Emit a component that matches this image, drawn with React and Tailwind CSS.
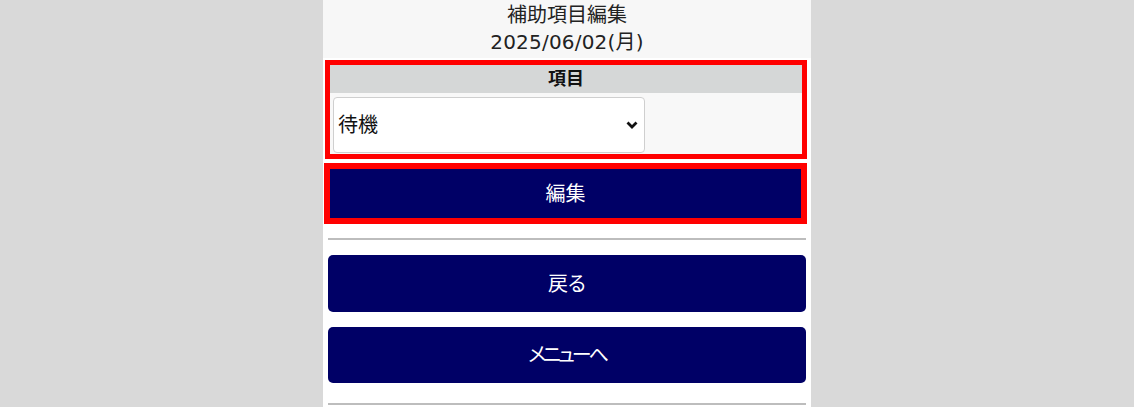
const FONT = {
    fontFamily: '"DejaVu Sans", "Noto Sans CJK JP", sans-serif',
};

const NavyButton = ({ label, className = "" }) => (
    <button
        className={`w-full bg-[#000066] text-white text-[20px] flex items-center justify-center [font-feature-settings:'palt'] ${className}`}
    >
        {label}
    </button>
);

const App = () => {
    return (
        <div
            className="min-h-[407px] w-full bg-[#d9d9d9] flex justify-center"
            style={FONT}
        >
            <div className="w-[488px] bg-white flex flex-col">
                {/* title */}
                <div className="bg-[#f7f7f7] h-[58px] flex flex-col items-center text-[20px] leading-[27px] text-[#222] pt-[2px]">
                    <p>補助項目編集</p>
                    <p className="tracking-[0.2px]">2025/06/02(月)</p>
                </div>

                {/* field */}
                <div className="mt-[2px] ml-[2px] mr-[4px] border-[5px] border-[#ff0000] bg-[#f8f8f8]">
                    <div className="h-[28px] bg-[#d5d7d7] text-center text-[18px] leading-[28px] font-bold text-[#111]">
                        項目
                    </div>
                    <div className="pl-[3px] pt-[4px] pb-[1px]">
                        <div className="w-[312px] h-[56px] bg-white border border-[#cfcfcf] rounded-[4px] flex items-center justify-between pl-[4px] pr-[6px] text-[20px] text-[#111]">
                            <span>待機</span>
                            <svg width="12" height="8" viewBox="0 0 12 8">
                                <path
                                    d="M1.5 1.5 L6 6 L10.5 1.5"
                                    fill="none"
                                    stroke="#111"
                                    strokeWidth="2.8"
                                />
                            </svg>
                        </div>
                    </div>
                </div>

                <div className="mt-[4px] ml-[1px] mr-[4px] border-[6px] border-[#ff0000]">
                    <NavyButton label="編集" className="h-[49px]" />
                </div>

                <div className="mx-[5px] mt-[14px] border-t-2 border-[#bdbdbd]" />

                <div className="mx-[5px] mt-[15px] flex flex-col gap-[15px]">
                    <NavyButton label="戻る" className="h-[57px] rounded-[5px]" />
                    <NavyButton
                        label="メニューへ"
                        className="h-[56px] rounded-[5px] tracking-[-3px]"
                    />
                </div>

                <div className="mx-[5px] mt-[20px] border-t-2 border-[#bdbdbd]" />
            </div>
        </div>
    );
};

export default App;
